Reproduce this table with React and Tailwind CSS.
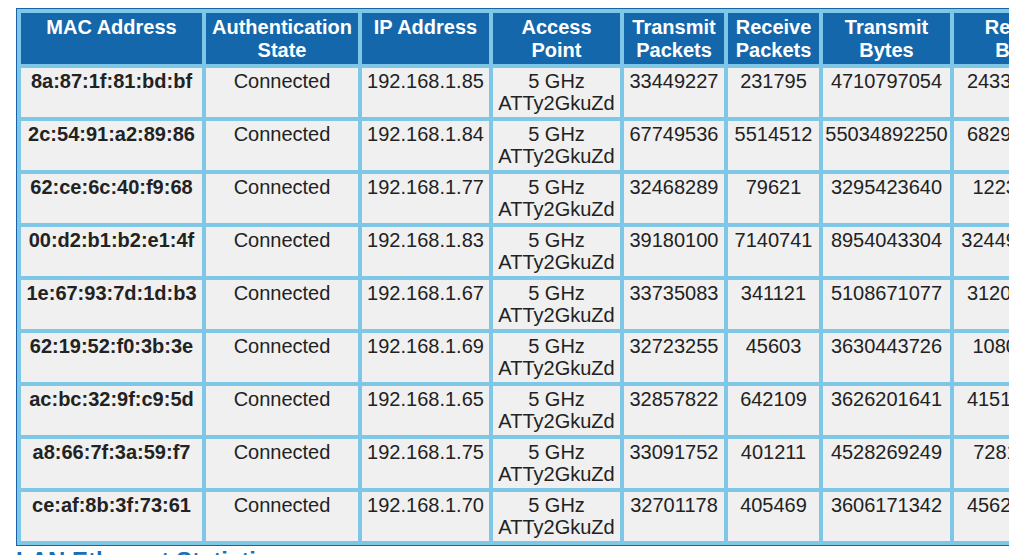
import React from 'react';

const columns = [
    { label: ['MAC Address'], width: 'w-[181px]' },
    { label: ['Authentication', 'State'], width: 'w-[152px]' },
    { label: ['IP Address'], width: 'w-[127px]' },
    { label: ['Access', 'Point'], width: 'w-[127px]' },
    { label: ['Transmit', 'Packets'], width: 'w-[100px]' },
    { label: ['Receive', 'Packets'], width: 'w-[91px]' },
    { label: ['Transmit', 'Bytes'], width: 'w-[127px]' },
    { label: ['Receive', 'Bytes'], width: 'w-[137px]' },
];

const clients = [
    { mac: '8a:87:1f:81:bd:bf', ip: '192.168.1.85', txPkts: '33449227', rxPkts: '231795', txBytes: '4710797054', rxBytes: '2433182510' },
    { mac: '2c:54:91:a2:89:86', ip: '192.168.1.84', txPkts: '67749536', rxPkts: '5514512', txBytes: '55034892250', rxBytes: '6829941837' },
    { mac: '62:ce:6c:40:f9:68', ip: '192.168.1.77', txPkts: '32468289', rxPkts: '79621', txBytes: '3295423640', rxBytes: '122308765' },
    { mac: '00:d2:b1:b2:e1:4f', ip: '192.168.1.83', txPkts: '39180100', rxPkts: '7140741', txBytes: '8954043304', rxBytes: '32449182107' },
    { mac: '1e:67:93:7d:1d:b3', ip: '192.168.1.67', txPkts: '33735083', rxPkts: '341121', txBytes: '5108671077', rxBytes: '3120556789' },
    { mac: '62:19:52:f0:3b:3e', ip: '192.168.1.69', txPkts: '32723255', rxPkts: '45603', txBytes: '3630443726', rxBytes: '108033451' },
    { mac: 'ac:bc:32:9f:c9:5d', ip: '192.168.1.65', txPkts: '32857822', rxPkts: '642109', txBytes: '3626201641', rxBytes: '4151972360' },
    { mac: 'a8:66:7f:3a:59:f7', ip: '192.168.1.75', txPkts: '33091752', rxPkts: '401211', txBytes: '4528269249', rxBytes: '728114096' },
    { mac: 'ce:af:8b:3f:73:61', ip: '192.168.1.70', txPkts: '32701178', rxPkts: '405469', txBytes: '3606171342', rxBytes: '4562008127' },
];

const cell = 'bg-[#f0f0f0] text-center align-top pt-[2px] pb-[3px] px-0 h-[49px] whitespace-nowrap';

const App = () => {
    return (
        <div className="bg-white min-h-screen font-['Liberation_Sans',Arial,sans-serif] text-[20px] leading-[22px] text-[#222]">
            {/* table is wider than the window, the wrapper cuts it off */}
            <div className="pt-[8px] pl-[16px] w-[1009px] overflow-hidden">
                <table className="table-fixed border-separate border-spacing-[4px] border border-[#1a63a8] bg-[#7ec7e7] w-max">
                    <thead>
                        <tr>
                            {columns.map((col) => (
                                <th
                                    key={col.label.join(' ')}
                                    className={`${col.width} h-[51px] bg-[#1567ab] text-white font-bold text-center align-top pt-[3px] leading-[23px] px-0`}
                                >
                                    {col.label.map((line, i) => (
                                        <div key={i}>{line}</div>
                                    ))}
                                </th>
                            ))}
                        </tr>
                    </thead>
                    <tbody>
                        {clients.map((c) => (
                            <tr key={c.mac}>
                                <td className={`${cell} font-bold`}>{c.mac}</td>
                                <td className={cell}>Connected</td>
                                <td className={cell}>{c.ip}</td>
                                <td className={cell}>
                                    5 GHz
                                    <br />
                                    ATTy2GkuZd
                                </td>
                                <td className={cell}>{c.txPkts}</td>
                                <td className={cell}>{c.rxPkts}</td>
                                <td className={cell}>{c.txBytes}</td>
                                <td className={cell}>{c.rxBytes}</td>
                            </tr>
                        ))}
                    </tbody>
                </table>
            </div>
            <h2 className="pl-[16px] pt-[1px] text-[24px] leading-[28px] font-bold text-[#1a6fb5]">
                LAN Ethernet Statistics
            </h2>
        </div>
    );
};

export default App;
